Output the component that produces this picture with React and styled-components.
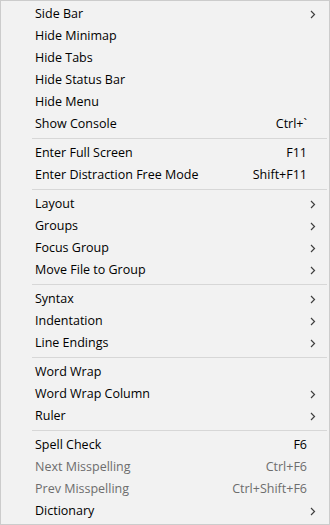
import React from "react";
import styled, { createGlobalStyle } from "styled-components";

const Global = createGlobalStyle`
  html, body { margin: 0; padding: 0; background: #ffffff; }
  body { font-family: "Open Sans", "Noto Sans", sans-serif; }
`;

const Menu = styled.div`
  box-sizing: border-box;
  width: 330px;
  height: 525px;
  background: #f2f2f2;
  border: 1px solid #cccccc;
  padding: 2px 2px 2px 2px;
  display: flex;
  flex-direction: column;
  font-family: "Open Sans", "Noto Sans", sans-serif;
  font-size: 12.5px;
`;

const Row = styled.div`
  height: 22px;
  display: grid;
  grid-template-columns: 1fr auto 20px;
  align-items: center;
  padding-left: 32px;
  padding-right: 0;
  color: ${(p) => (p.$disabled ? "#6d6d6d" : "#000000")};
  white-space: nowrap;
`;

const Label = styled.span`
  line-height: 22px;
`;

const Shortcut = styled.span`
  line-height: 22px;
  text-align: right;
`;

const Arrow = styled.span`
  display: flex;
  align-items: center;
  justify-content: flex-start;
  padding-left: 3px;
`;

const Separator = styled.div`
  height: 7px;
  display: flex;
  align-items: center;
  margin-left: 29px;
  &::after {
    content: "";
    flex: 1;
    height: 1px;
    background: #d7d7d7;
    margin-top: -1px;
  }
`;

const Chevron = () => (
  <svg width="6" height="9" viewBox="0 0 6 9">
    <polyline points="1,1 4.5,4.5 1,8" fill="none" stroke="#404040" strokeWidth="1.2" />
  </svg>
);

const groups = [
  [
    { label: "Side Bar", sub: true },
    { label: "Hide Minimap" },
    { label: "Hide Tabs" },
    { label: "Hide Status Bar" },
    { label: "Hide Menu" },
    { label: "Show Console", key: "Ctrl+`" },
  ],
  [
    { label: "Enter Full Screen", key: "F11" },
    { label: "Enter Distraction Free Mode", key: "Shift+F11" },
  ],
  [
    { label: "Layout", sub: true },
    { label: "Groups", sub: true },
    { label: "Focus Group", sub: true },
    { label: "Move File to Group", sub: true },
  ],
  [
    { label: "Syntax", sub: true },
    { label: "Indentation", sub: true },
    { label: "Line Endings", sub: true },
  ],
  [
    { label: "Word Wrap" },
    { label: "Word Wrap Column", sub: true },
    { label: "Ruler", sub: true },
  ],
  [
    { label: "Spell Check", key: "F6" },
    { label: "Next Misspelling", key: "Ctrl+F6", disabled: true },
    { label: "Prev Misspelling", key: "Ctrl+Shift+F6", disabled: true },
    { label: "Dictionary", sub: true },
  ],
];

export default function App() {
  return (
    <>
      <Global />
      <Menu>
        {groups.map((g, gi) => (
          <React.Fragment key={gi}>
            {gi > 0 && <Separator />}
            {g.map((it) => (
              <Row key={it.label} $disabled={it.disabled}>
                <Label>{it.label}</Label>
                <Shortcut>{it.key || ""}</Shortcut>
                <Arrow>{it.sub ? <Chevron /> : null}</Arrow>
              </Row>
            ))}
          </React.Fragment>
        ))}
      </Menu>
    </>
  );
}
